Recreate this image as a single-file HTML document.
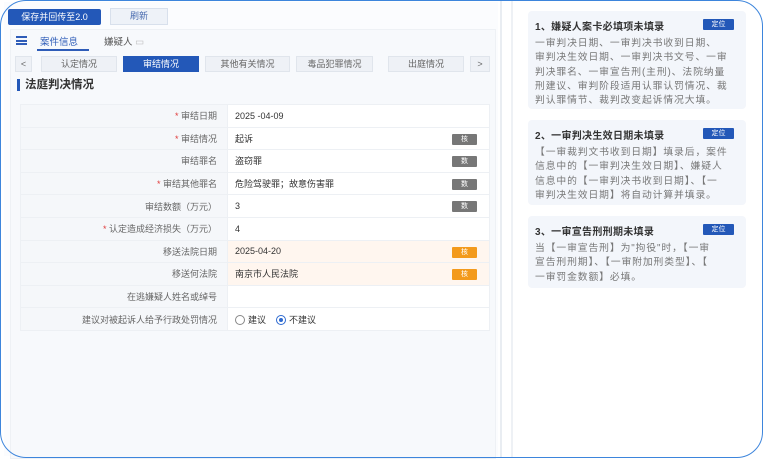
<!DOCTYPE html>
<html><head><meta charset="utf-8"><style>
*{box-sizing:border-box;margin:0;padding:0}
body{width:763px;height:458px;overflow:hidden;background:#fff;font-family:"Liberation Sans","Noto Sans CJK SC",sans-serif;font-size:10px;color:#444}
.frame{position:absolute;left:0;top:0;width:763px;height:458px;border:1.5px solid #3d85dc;border-radius:26px;pointer-events:none;z-index:10}
.left{position:absolute;left:4px;top:2px;width:494px;height:454px;background:#fbfcfe}
.btn1{position:absolute;left:8px;top:9px;width:93px;height:16px;background:#2358b8;color:#fff;font-size:9px;line-height:16px;text-align:center;border-radius:2px}
.btn2{position:absolute;left:110px;top:8px;width:58px;height:17px;background:#eef2f8;border:1px solid #d8e0ec;color:#4a6cb0;font-size:9px;line-height:15px;text-align:center}
.panel{position:absolute;left:10px;top:29px;width:486px;height:430px;background:#f7f9fc;border:1px solid #eef1f5}
.ham{position:absolute;left:16px;top:36px;width:11px;height:9px;border-top:2px solid #2e5cb8;border-bottom:2px solid #2e5cb8}
.ham:after{content:"";position:absolute;left:0;top:1.5px;width:11px;height:2px;background:#2e5cb8}
.t1{position:absolute;left:40px;top:34px;color:#2e5cb8;font-size:9.5px}
.t1u{position:absolute;left:37px;top:49px;width:52px;height:2px;background:#2e5cb8}
.t2{position:absolute;left:104px;top:34px;color:#555;font-size:9.5px}
.sub{position:absolute;top:56px;height:16px;background:#eef1f6;border:1px solid #e0e5ec;color:#666;font-size:9px;line-height:14px;text-align:center}
.sub.a{background:#2358b8;color:#fff;border-color:#2358b8}
h3{position:absolute;left:17px;top:79px;font-size:11.5px;color:#333;border-left:3px solid #2358b8;padding-left:5px;line-height:12px}
table{position:absolute;left:20px;top:104px;width:470px;border-collapse:collapse;background:#fff}
td{height:22.6px;border:1px solid #edf0f4;font-size:9px}
td.l{width:207px;background:#f5f7fa;text-align:right;padding-right:10px;color:#666}
td.v{padding-left:7px;color:#333;position:relative}
td.o{background:#fff6ef}
.r{color:#e03a3a}
.tag{position:absolute;right:12px;top:6px;width:25px;height:11px;background:#777;color:#fff;font-size:7px;line-height:11px;text-align:center;border-radius:1px}
.tag.or{background:#f39a1c}
.rad{display:inline-block;width:10px;height:10px;border:1px solid #888;border-radius:50%;vertical-align:-2px;margin-right:3px;position:relative}
.rad.on{border-color:#2e6ad0}.rad.on:after{content:"";position:absolute;left:2px;top:2px;width:4px;height:4px;border-radius:50%;background:#2e6ad0}
.vl{position:absolute;top:0;height:458px;width:2px;background:#e9edf2}
.card{position:absolute;left:528px;width:218px;background:#f3f6fb;border-radius:4px;padding:7px 7px;overflow:hidden}
.card b{display:block;font-size:10px;color:#333;margin-bottom:4px;letter-spacing:0.3px}
.card p{font-size:9.8px;line-height:14.3px;color:#777;letter-spacing:0.9px;white-space:nowrap}
.cb{position:absolute;right:12px;top:8px;width:31px;height:11px;background:#2358b8;color:#fff;font-size:7px;line-height:11px;text-align:center;border-radius:1px}
</style></head><body>
<div class="left"></div>
<div class="btn1">保存并回传至2.0</div>
<div class="btn2">刷新</div>
<div class="panel"></div>
<div class="ham"></div>
<div class="t1">案件信息</div><div class="t1u"></div>
<div class="t2">嫌疑人 <span style="color:#bbb">▭</span></div>
<div class="sub" style="left:15px;width:17px">&lt;</div>
<div class="sub" style="left:41px;width:76px">认定情况</div>
<div class="sub a" style="left:123px;width:76px">审结情况</div>
<div class="sub" style="left:205px;width:85px">其他有关情况</div>
<div class="sub" style="left:296px;width:77px">毒品犯罪情况</div>
<div class="sub" style="left:388px;width:76px">出庭情况</div>
<div class="sub" style="left:470px;width:20px">&gt;</div>
<h3>法庭判决情况</h3>
<table>
<tr><td class="l"><span class="r">* </span>审结日期</td><td class="v">2025 -04-09</td></tr>
<tr><td class="l"><span class="r">* </span>审结情况</td><td class="v">起诉<span class="tag">核</span></td></tr>
<tr><td class="l">审结罪名</td><td class="v">盗窃罪<span class="tag">数</span></td></tr>
<tr><td class="l"><span class="r">* </span>审结其他罪名</td><td class="v">危险驾驶罪；故意伤害罪<span class="tag">数</span></td></tr>
<tr><td class="l">审结数额（万元）</td><td class="v">3<span class="tag">数</span></td></tr>
<tr><td class="l"><span class="r">* </span>认定造成经济损失（万元）</td><td class="v">4</td></tr>
<tr><td class="l">移送法院日期</td><td class="v o">2025-04-20<span class="tag or">核</span></td></tr>
<tr><td class="l">移送何法院</td><td class="v o">南京市人民法院<span class="tag or">核</span></td></tr>
<tr><td class="l">在逃嫌疑人姓名或绰号</td><td class="v"></td></tr>
<tr><td class="l">建议对被起诉人给予行政处罚情况</td><td class="v"><span class="rad"></span>建议 &nbsp;&nbsp;&nbsp;<span class="rad on"></span>不建议</td></tr>
</table>
<div class="vl" style="left:500px"></div>
<div class="vl" style="left:511px;background:#eef1f5"></div>
<div class="card" style="top:11px;height:98px"><b>1、嫌疑人案卡必填项未填录</b><span class="cb">定位</span><p>一审判决日期、一审判决书收到日期、<br>审判决生效日期、一审判决书文号、一审<br>判决罪名、一审宣告刑(主刑)、法院纳量<br>刑建议、审判阶段适用认罪认罚情况、裁<br>判认罪情节、裁判改变起诉情况大填。</p></div>
<div class="card" style="top:120px;height:85px"><b>2、一审判决生效日期未填录</b><span class="cb">定位</span><p>【一审裁判文书收到日期】填录后，案件<br>信息中的【一审判决生效日期】、嫌疑人<br>信息中的【一审判决书收到日期】、【一<br>审判决生效日期】将自动计算并填录。</p></div>
<div class="card" style="top:216px;height:72px"><b>3、一审宣告刑刑期未填录</b><span class="cb">定位</span><p>当【一审宣告刑】为"拘役"时，【一审<br>宣告刑刑期】、【一审附加刑类型】、【<br>一审罚金数额】必填。</p></div>
<div class="frame"></div>
</body></html>
